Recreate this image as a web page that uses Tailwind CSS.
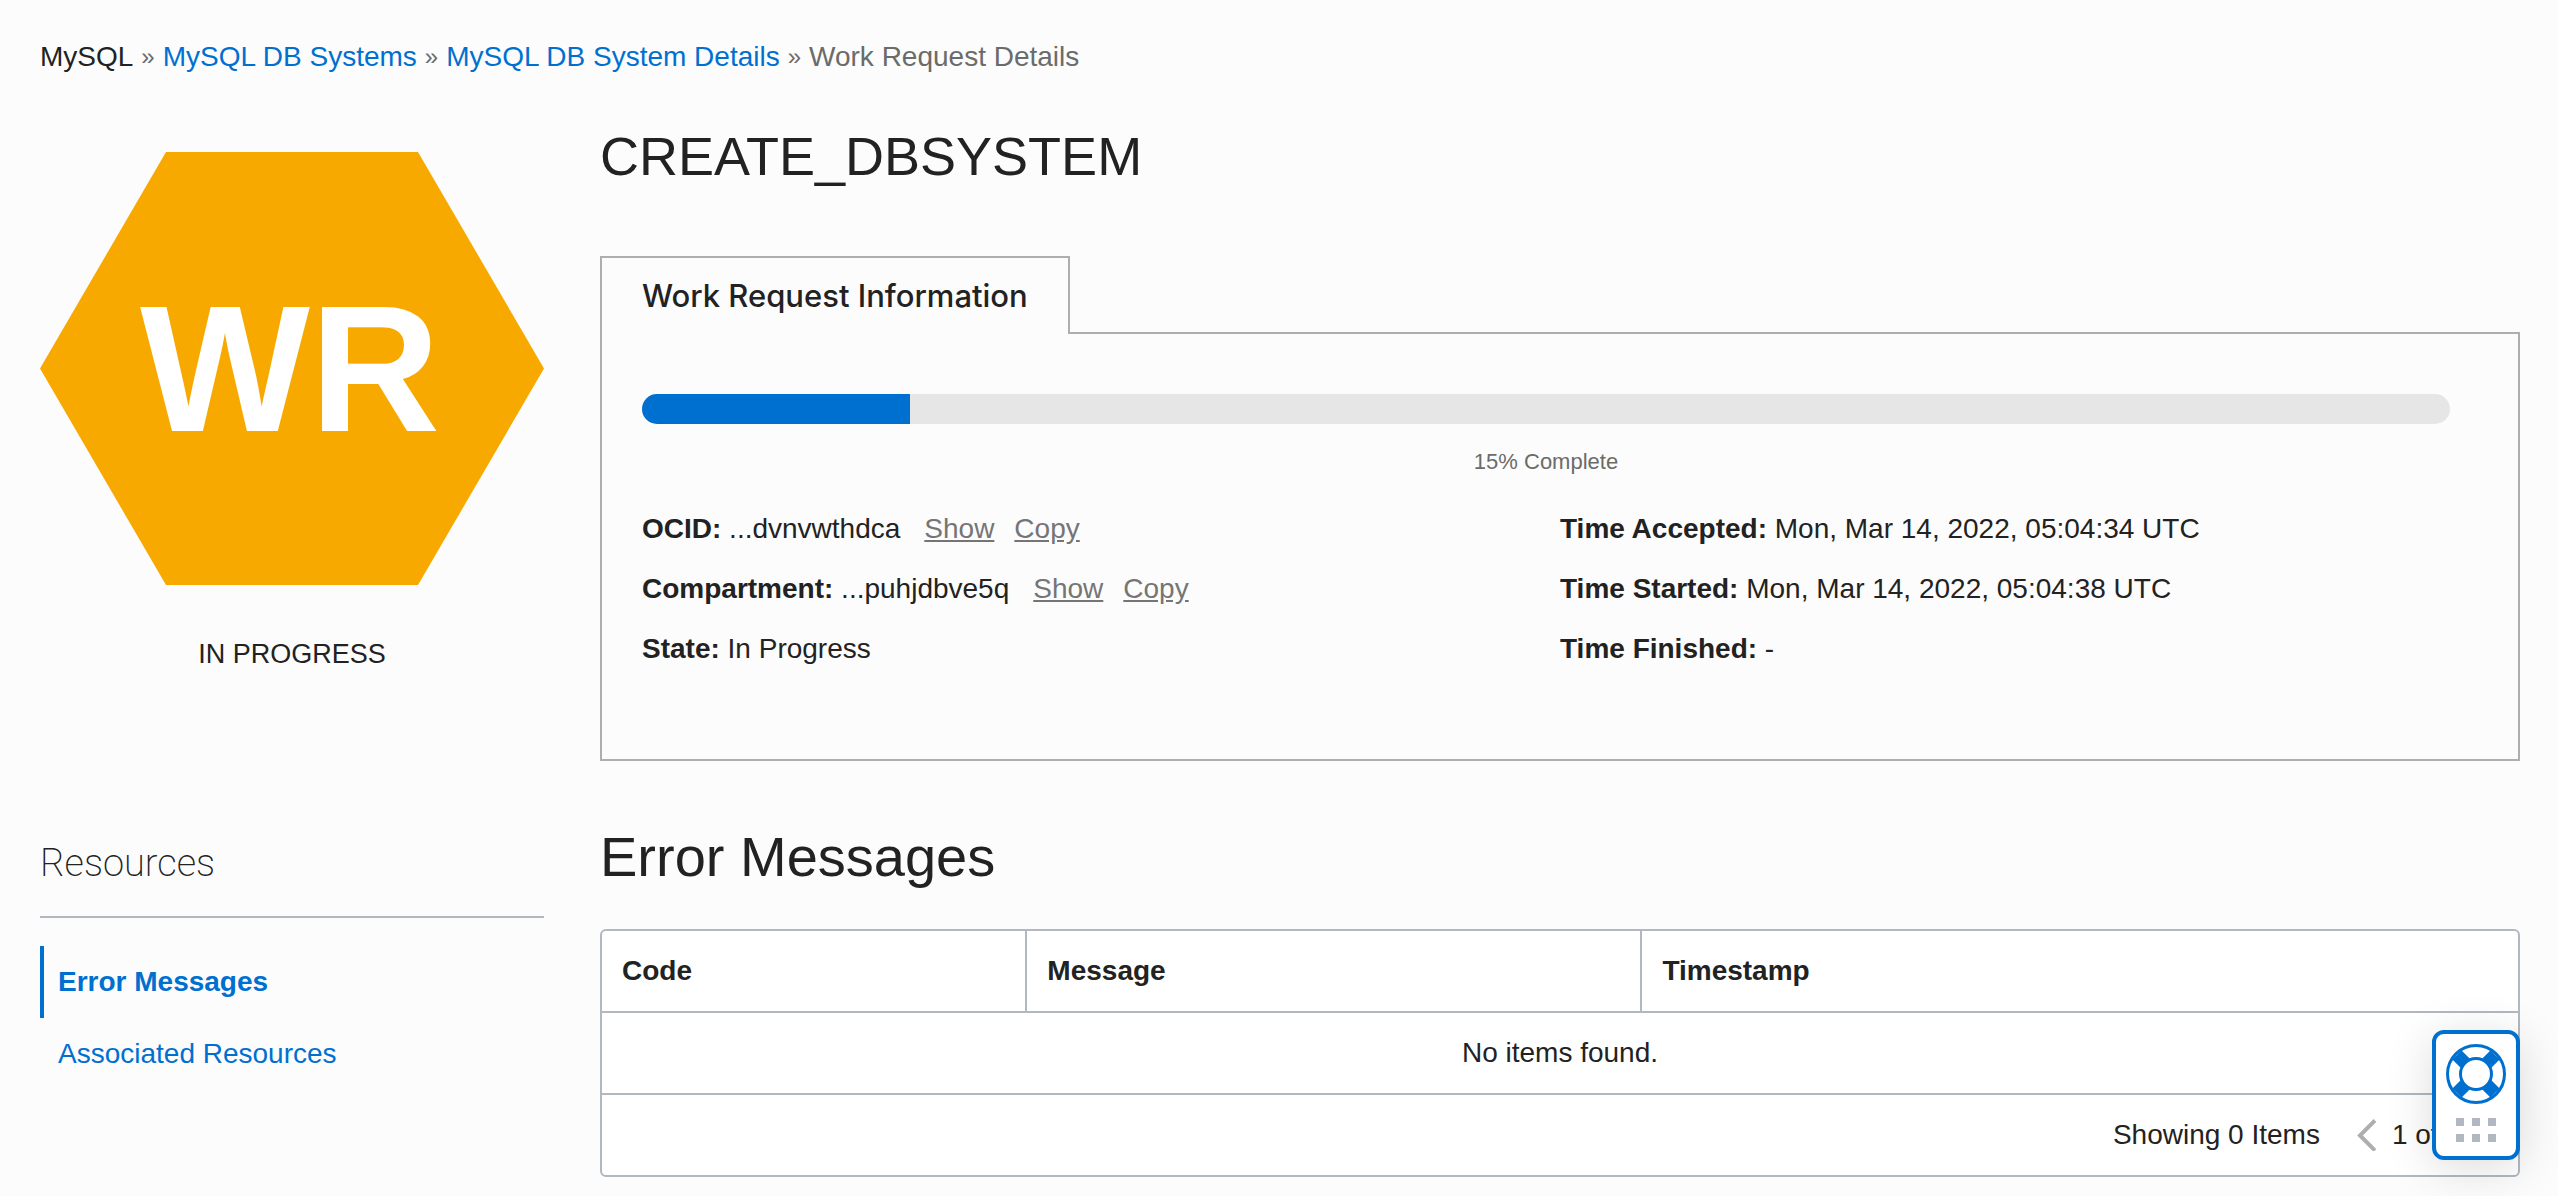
<!DOCTYPE html>
<html lang="en">
<head>
<meta charset="utf-8">
<meta name="viewport" content="width=device-width, initial-scale=1">
<title>Work Request Details</title>
<script src="https://cdn.jsdelivr.net/npm/@tailwindcss/browser@4"></script>
</head>
<body class="relative min-h-screen bg-[#fcfcfc] font-['Liberation_Sans',Arial,sans-serif] text-[28px] leading-10 text-[#222]">
<div class="pt-[37px] pr-[38px] pl-10">
  <nav aria-label="Breadcrumb">
    <ol class="flex gap-2 text-[#6b6b6b]">
      <li class="text-[#222]">MySQL</li>
      <li aria-hidden="true" class="text-2xl leading-10">»</li>
      <li><a href="#" class="text-[#0070d0]">MySQL DB Systems</a></li>
      <li aria-hidden="true" class="text-2xl leading-10">»</li>
      <li><a href="#" class="text-[#0070d0]">MySQL DB System Details</a></li>
      <li aria-hidden="true" class="text-2xl leading-10">»</li>
      <li aria-current="page">Work Request Details</li>
    </ol>
  </nav>

  <div class="mt-[47px] grid grid-cols-[504px_minmax(0,1fr)] gap-14">
    <aside class="pt-7">
      <svg viewBox="0 0 504 433" class="block w-full" role="img" aria-label="Work request">
        <polygon points="126,0 378,0 504,216.500 378,433 126,433 0,216.500" fill="#f8a900"/>
        <text x="250" y="279" text-anchor="middle" font-size="180" font-weight="700" fill="#fff">WR</text>
      </svg>
      <p class="mt-[49px] text-center text-[27px] leading-10">IN PROGRESS</p>

      <h2 class="mt-[165px] border-b-2 border-[#b1b8c2] pb-[29px] font-[Roboto,sans-serif] text-[38px] leading-12 font-extralight">Resources</h2>
      <nav aria-label="Resources" class="mt-7">
        <a href="#" class="block border-l-4 border-[#0070d0] pl-[14px] leading-[72px] font-bold text-[#0070d0]">Error Messages</a>
        <a href="#" class="block border-l-4 border-transparent pl-[14px] leading-[72px] text-[#0070d0]">Associated Resources</a>
      </nav>
    </aside>

    <main>
      <h1 class="text-[54px] leading-16">CREATE_DBSYSTEM</h1>

      <div role="tablist" class="relative mt-[68px] flex">
        <button role="tab" aria-selected="true" class="border-2 border-b-0 border-[#aeaeae] bg-[#fcfcfc] px-10 pt-[18px] pb-[18px] font-[Inter,sans-serif] text-[31px] leading-10 font-medium">Work Request Information</button>
      </div>
      <section role="tabpanel" class="-mt-[2px] border-2 border-[#aeaeae] px-10 pt-15 pb-20">
        <div class="mr-7">
          <div role="progressbar" aria-valuenow="15" aria-valuemin="0" aria-valuemax="100" aria-label="Progress" class="h-[30px] overflow-hidden rounded-full bg-[#e6e6e6]">
            <div class="h-full bg-[#0070d0]" style="width:14.8%"></div>
          </div>
          <p class="mt-6 text-center text-[22px] leading-7 text-[#6b6b6b]">15% Complete</p>
        </div>
        <div class="mt-[23px] grid grid-cols-2 leading-[60px]">
          <div>
            <p><b>OCID:</b> ...dvnvwthdca<a href="#" class="ml-6 text-[#757575] underline">Show</a><a href="#" class="ml-5 text-[#757575] underline">Copy</a></p>
            <p><b>Compartment:</b> ...puhjdbve5q<a href="#" class="ml-6 text-[#757575] underline">Show</a><a href="#" class="ml-5 text-[#757575] underline">Copy</a></p>
            <p><b>State:</b> In Progress</p>
          </div>
          <div>
            <p><b>Time Accepted:</b> Mon, Mar 14, 2022, 05:04:34 UTC</p>
            <p><b>Time Started:</b> Mon, Mar 14, 2022, 05:04:38 UTC</p>
            <p><b>Time Finished:</b> -</p>
          </div>
        </div>
      </section>

      <h2 class="mt-16 text-[56px] leading-16">Error Messages</h2>
      <div class="mt-10 overflow-hidden rounded-md border-2 border-[#b1b8c2] bg-white">
        <table class="w-full table-fixed border-separate border-spacing-0 leading-[80px]">
          <thead>
            <tr class="text-left">
              <th class="w-[22.2%] border-r-2 border-b-2 border-[#b1b8c2] p-0 pl-5">Code</th>
              <th class="w-[32.1%] border-r-2 border-b-2 border-[#b1b8c2] p-0 pl-5">Message</th>
              <th class="border-b-2 border-[#b1b8c2] p-0 pl-5">Timestamp</th>
            </tr>
          </thead>
          <tbody>
            <tr><td colspan="3" class="border-b-2 border-[#b1b8c2] p-0 text-center">No items found.</td></tr>
          </tbody>
        </table>
        <div class="flex h-20 items-center justify-end pr-5">
          <span>Showing 0 Items</span>
          <button aria-label="Previous page" class="ml-9"><svg class="block h-8 w-5" viewBox="0 0 20 32" fill="none" stroke="#aeaeae" stroke-width="4"><path d="M19 1.500 4 16.500l15 15"/></svg></button>
          <span class="ml-4">1 of 1</span>
          <button aria-label="Next page" class="ml-4"><svg class="block h-8 w-5" viewBox="0 0 20 32" fill="none" stroke="#aeaeae" stroke-width="4"><path d="m1 1.500 15 15-15 15"/></svg></button>
        </div>
      </div>
    </main>
  </div>
</div>

<!-- Floating help launcher -->
<button aria-label="Help" class="fixed right-[38px] bottom-9 flex h-[130px] w-[88px] flex-col items-center rounded-xl border-4 border-[#0070d0] bg-white pt-[10px] shadow-[0_8px_48px_rgba(0,0,0,0.14)]">
  <svg class="block size-[60px]" viewBox="0 0 60 60" fill="none" stroke="#0070d0">
    <path d="m11 11 9 9M40 40l9 9M49 11l-9 9M20 40l-9 9" stroke-width="13"/>
    <circle cx="30" cy="30" r="28.5" stroke-width="3"/>
    <circle cx="30" cy="30" r="15.5" fill="#fff" stroke-width="3"/>
  </svg>
  <svg class="mt-[14px] block h-6 w-10" viewBox="0 0 40 24" fill="#b1b8c2"><path d="M0 0h8v8H0zM16 0h8v8h-8zM32 0h8v8h-8zM0 16h8v8H0zM16 16h8v8h-8zM32 16h8v8h-8z"/></svg>
</button>
</body>
</html>
